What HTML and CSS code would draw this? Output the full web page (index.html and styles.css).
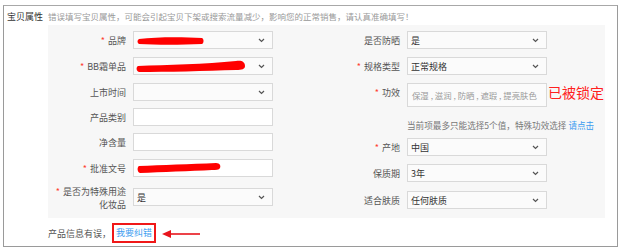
FILE: index.html
```html
<!DOCTYPE html>
<html lang="zh-CN">
<head>
<meta charset="utf-8">
<title>宝贝属性</title>
<link rel="stylesheet" href="styles.css">
</head>
<body>
<div class="frame">
  <div class="head">
    <span class="head-title">宝贝属性</span>
    <span class="head-tip">错误填写宝贝属性，可能会引起宝贝下架或搜索流量减少，影响您的正常销售，请认真准确填写！</span>
  </div>
  <div class="panel">
    <div class="col col-left">
      <div class="row r1">
        <label class="lab"><i class="req">*</i>品牌</label>
        <div class="sel">
          <svg class="redact" width="70" height="12" viewBox="0 0 70 12"><path d="M3 5 C20 3 45 3 66 4 C68 5 68 9 66 10 C45 11 20 11 3 10 C1 9 1 6 3 5 Z" fill="#ff0000"/></svg>
          <svg class="chev" width="7" height="5" viewBox="0 0 7 5"><polyline points="1,1 3.5,3.5 6,1" fill="none" stroke="#555" stroke-width="1.2"/></svg>
        </div>
      </div>
      <div class="row r2">
        <label class="lab"><i class="req">*</i>BB霜单品</label>
        <div class="sel">
          <svg class="redact" width="112" height="14" viewBox="0 0 112 14"><path d="M2 7 C30 6 70 5 100 2 C106 1 109 3 109 7 C109 10 106 11 100 11 C70 12 30 13 3 13 C0 12 0 8 2 7 Z" fill="#ff0000"/></svg>
          <svg class="chev" width="7" height="5" viewBox="0 0 7 5"><polyline points="1,1 3.5,3.5 6,1" fill="none" stroke="#555" stroke-width="1.2"/></svg>
        </div>
      </div>
      <div class="row r3">
        <label class="lab">上市时间</label>
        <div class="sel">
          <svg class="chev" width="7" height="5" viewBox="0 0 7 5"><polyline points="1,1 3.5,3.5 6,1" fill="none" stroke="#555" stroke-width="1.2"/></svg>
        </div>
      </div>
      <div class="row r4">
        <label class="lab">产品类别</label>
        <div class="inp"></div>
      </div>
      <div class="row r5">
        <label class="lab">净含量</label>
        <div class="inp"></div>
      </div>
      <div class="row r6">
        <label class="lab"><i class="req">*</i>批准文号</label>
        <div class="inp">
          <svg class="redact" width="86" height="12" viewBox="0 0 86 12"><path d="M3 4 C25 3 55 2 80 1 C84 1 85 4 84 6 C83 8 80 8 76 8 C55 9 25 10 4 11 C1 10 1 5 3 4 Z" fill="#ff0000"/></svg>
        </div>
      </div>
      <div class="row r7">
        <label class="lab lab2"><i class="req">*</i>是否为特殊用途<br>化妆品</label>
        <div class="sel"><span class="val">是</span>
          <svg class="chev" width="7" height="5" viewBox="0 0 7 5"><polyline points="1,1 3.5,3.5 6,1" fill="none" stroke="#555" stroke-width="1.2"/></svg>
        </div>
      </div>
    </div>
    <div class="col col-right">
      <div class="row r1">
        <label class="lab">是否防晒</label>
        <div class="sel"><span class="val">是</span>
          <svg class="chev" width="7" height="5" viewBox="0 0 7 5"><polyline points="1,1 3.5,3.5 6,1" fill="none" stroke="#555" stroke-width="1.2"/></svg>
        </div>
      </div>
      <div class="row r2">
        <label class="lab"><i class="req">*</i>规格类型</label>
        <div class="sel"><span class="val">正常规格</span>
          <svg class="chev" width="7" height="5" viewBox="0 0 7 5"><polyline points="1,1 3.5,3.5 6,1" fill="none" stroke="#555" stroke-width="1.2"/></svg>
        </div>
      </div>
      <div class="row rx">
        <label class="lab lab-top"><i class="req">*</i>功效</label>
        <div class="multi"><span class="ph">保湿 , 滋润 , 防晒 , 遮瑕 , 提亮肤色</span></div>
        <span class="locked">已被锁定</span>
      </div>
      <div class="hint">当前项最多只能选择5个值，特殊功效选择 <a class="link">请点击</a></div>
      <div class="row r5b">
        <label class="lab"><i class="req">*</i>产地</label>
        <div class="sel"><span class="val">中国</span>
          <svg class="chev" width="7" height="5" viewBox="0 0 7 5"><polyline points="1,1 3.5,3.5 6,1" fill="none" stroke="#555" stroke-width="1.2"/></svg>
        </div>
      </div>
      <div class="row r6b">
        <label class="lab">保质期</label>
        <div class="sel"><span class="val">3年</span>
          <svg class="chev" width="7" height="5" viewBox="0 0 7 5"><polyline points="1,1 3.5,3.5 6,1" fill="none" stroke="#555" stroke-width="1.2"/></svg>
        </div>
      </div>
      <div class="row r7b">
        <label class="lab">适合肤质</label>
        <div class="sel"><span class="val">任何肤质</span>
          <svg class="chev" width="7" height="5" viewBox="0 0 7 5"><polyline points="1,1 3.5,3.5 6,1" fill="none" stroke="#555" stroke-width="1.2"/></svg>
        </div>
      </div>
    </div>
  </div>
  <div class="foot">
    <span class="foot-text">产品信息有误，</span><a class="fix">我要纠错</a>
    <svg class="arrow" width="40" height="10" viewBox="0 0 40 10"><polygon points="0,5 9,1 9,9" fill="#e8141c"/><line x1="8" y1="5" x2="38" y2="5" stroke="#e8141c" stroke-width="1.6"/></svg>
  </div>
</div>
</body>
</html>
```
FILE: styles.css
```css
* { box-sizing: border-box; }
html, body { margin: 0; padding: 0; background: #fff; }
body {
  font-family: "Noto Sans CJK SC", "Noto Sans", sans-serif;
  font-size: 9px;
  color: #333;
}
.frame {
  margin: 5px 0 0 3px;
  width: 615px;
  height: 242px;
  border: 1px solid #9a9a9a;
  border-top-color: #a8a8a8;
}
.head {
  height: 19px;
  display: flex;
  align-items: center;
  padding-left: 3px;
  padding-top: 1px;
}
.head-title { color: #333; width: 41px; font-size: 9px; }
.head-tip { color: #999; font-size: 8.5px; white-space: nowrap; }
.panel {
  margin-left: 44px;
  width: 557px;
  height: 193px;
  background: #f7f7f7;
  display: grid;
  grid-template-columns: 225px 1fr;
  column-gap: 7px;
  padding-top: 6px;
}
.col { display: flex; flex-direction: column; }
.row { display: flex; align-items: center; height: 18px; }
.lab {
  text-align: right;
  color: #555;
  flex: none;
  margin-right: 7px;
  white-space: nowrap;
}
.col-left .lab { width: 78px; }
.col-right .lab { width: 120px; }
.req { color: #ff3b30; font-style: normal; margin-right: 3px; }
.sel, .inp {
  position: relative;
  width: 140px;
  height: 18px;
  border: 1px solid #d9d9d9;
  background: #fbfbfb;
  display: flex;
  align-items: center;
  padding-left: 3px;
}
.inp { background: #fff; }
.val { color: #333; }
.chev { position: absolute; right: 7px; top: 6px; }
.redact { display: block; margin-left: -1px; }

.col-left .r2 { margin-top: 8px; }
.col-left .r3 { margin-top: 8px; }
.col-left .r4 { margin-top: 7px; }
.col-left .r5 { margin-top: 7px; }
.col-left .r6 { margin-top: 8px; }
.col-left .r7 { margin-top: 9px; height: 26px; align-items: flex-start; }
.col-left .r7 .sel { margin-top: 2px; }
.lab2 { line-height: 13px; margin-top: -1px; }

.col-right .r2 { margin-top: 8px; }
.col-right .rx { margin-top: 8px; height: 24px; align-items: flex-start; }
.lab-top { margin-top: 3px; }
.multi {
  width: 140px;
  height: 24px;
  border: 1px solid #d9d9d9;
  background: #fbfbfb;
  display: flex;
  align-items: center;
  padding-left: 4px;
  overflow: hidden;
}
.ph { color: #999; font-size: 8.4px; white-space: nowrap; }
.locked {
  color: #ff2020;
  font-size: 14px;
  line-height: 16px;
  margin-left: 1px;
  margin-top: 1px;
  white-space: nowrap;
}
.hint {
  margin-top: 12px;
  margin-left: 127px;
  color: #777;
  font-size: 8.6px;
  line-height: 12px;
  white-space: nowrap;
}
.link { color: #3c9cf0; }
.col-right .r5b { margin-top: 7px; }
.col-right .r6b { margin-top: 8px; }
.col-right .r7b { margin-top: 9px; }

.foot {
  display: flex;
  align-items: center;
  margin-left: 44px;
  margin-top: 5px;
  height: 20px;
}
.foot-text { color: #555; }
.fix {
  color: #3c9cf0;
  border: 2px solid #f01818;
  padding: 2px 2px;
  line-height: 12px;
  margin-left: 1px;
}
.arrow { margin-left: 6px; margin-top: 1px; }
```
